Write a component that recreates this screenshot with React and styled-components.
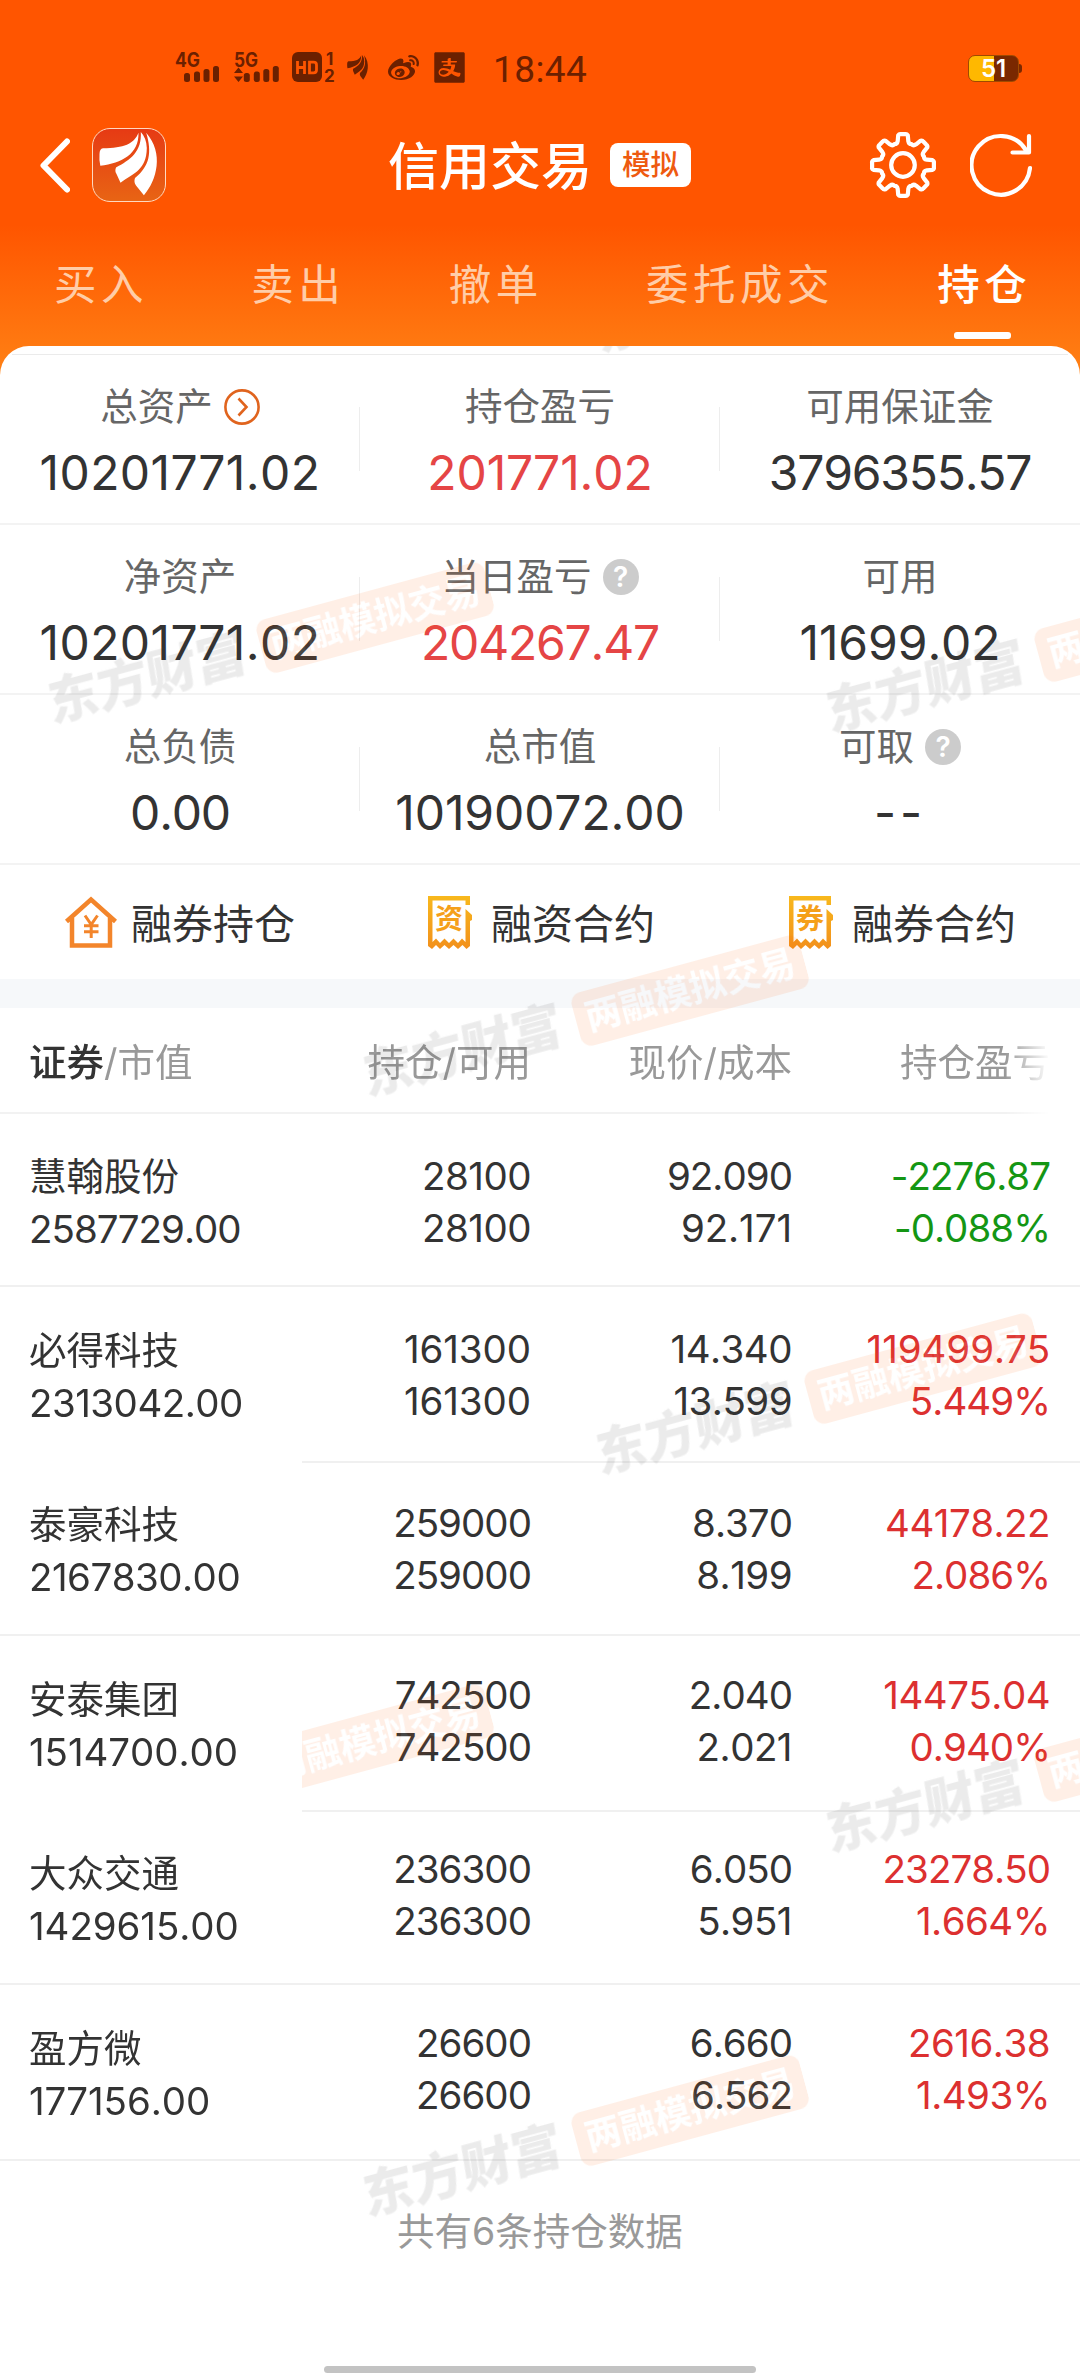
import React from 'react';
import styled, { createGlobalStyle, css } from 'styled-components';
import { FaWeibo } from 'react-icons/fa';
import { AiFillAlipaySquare } from 'react-icons/ai';

const GlobalStyle = createGlobalStyle`
    * {
        box-sizing: border-box;
    }

    body {
        margin: 0;
        background: #ffffff;
        font-family: Inter, "Noto Sans CJK SC", sans-serif;
        color: #333333;
    }
`;

const Screen = styled.div`
    position: relative;
    width: 1080px;
    height: 2376px;
    overflow: hidden;
    display: flex;
    flex-direction: column;
    background: linear-gradient(#ff5500 0, #ff5500 225px, #ff8014 370px, #ff8014 400px, #ffffff 400px);
`;

/* ---------- status bar ---------- */

const StatusBar = styled.div`
    height: 120px;
    padding: 52px 61px 0 175px;
    display: flex;
    align-items: flex-start;
    color: #6b2000;
`;

const StatusSvg = styled.svg`
    display: block;
    flex: none;
    overflow: visible;
    margin-right: ${(p) => p.$gap || 0}px;
    margin-top: ${(p) => p.$top || 0}px;
    fill: currentColor;
`;

const StatusGlyph = styled.div`
    display: flex;
    margin-top: ${(p) => p.$top || 0}px;
    margin-right: ${(p) => p.$gap}px;
`;

const Clock = styled.div`
    font-family: Roboto, sans-serif;
    font-size: 37px;
    line-height: 36px;
    letter-spacing: 0.4px;
`;

const Battery = styled.div`
    position: relative;
    width: 51px;
    height: 27px;
    margin: 3px 0 0 auto;
    border-radius: 7px;
    border: 1px solid #a04a00;
    background: linear-gradient(90deg, #ffb800 51%, #7a2800 51%);
    color: #ffffff;
    font-size: 24px;
    font-weight: 600;
    line-height: 26px;
    text-align: center;

    &::after {
        content: "";
        position: absolute;
        right: -4px;
        top: 8px;
        width: 3px;
        height: 9px;
        border-radius: 0 3px 3px 0;
        background: #7a2800;
    }
`;

/* ---------- title bar ---------- */

const TitleBar = styled.div`
    height: 110px;
    padding: 8px 48px 0 40px;
    display: grid;
    grid-template-columns: 348px 1fr auto;
    align-items: start;
`;

const TitleLeft = styled.div`
    display: flex;
    gap: 22px;
`;

const AppLogo = styled.div`
    width: 74px;
    height: 74px;
    border-radius: 18px;
    border: 1px solid #ffd9c0;
    background: linear-gradient(#e63a14, #e86414);
    overflow: hidden;
`;

const Title = styled.div`
    display: flex;
    align-items: flex-start;
    gap: 18px;
    height: 74px;
    color: #ffffff;
    font-size: 51px;
    font-weight: 500;
    line-height: 77px;
`;

const ModeBadge = styled.span`
    width: 81px;
    height: 44px;
    margin-top: 15px;
    border-radius: 8px;
    background: #ffffff;
    color: #ee5a10;
    font-size: 28.5px;
    font-weight: 500;
    line-height: 43px;
    text-align: center;
`;

const TitleActions = styled.div`
    display: flex;
    gap: 33px;
    padding-top: 3px;
`;

const LineSvg = styled.svg`
    display: block;
    flex: none;
    fill: none;
    stroke: #ffffff;
    stroke-linecap: round;
    stroke-linejoin: round;
`;

/* ---------- tabs ---------- */

const Tabs = styled.div`
    height: 116px;
    padding-left: 54px;
    display: flex;
    gap: 103.3px;
`;

const Tab = styled.div`
    position: relative;
    padding-top: 25px;
    color: ${(p) => (p.$active ? '#ffffff' : '#ffcda8')};
    font-size: 42.5px;
    font-weight: ${(p) => (p.$active ? 500 : 400)};
    line-height: 60px;
    letter-spacing: 4.5px;
    white-space: nowrap;

    ${(p) =>
        p.$active &&
        css`
            &::after {
                content: "";
                position: absolute;
                left: 17px;
                top: 102px;
                width: 57px;
                height: 7px;
                border-radius: 3px;
                background: #ffffff;
            }
        `}
`;

/* ---------- account summary ---------- */

const Sheet = styled.div`
    flex: 1;
    border-radius: 29px 29px 0 0;
    background: #ffffff;
    overflow: hidden;
`;

const TopRule = styled.div`
    height: 1px;
    margin: 8px 12px 0;
    background: #ebebeb;
`;

const SummaryRow = styled.div`
    height: 170px;
    border-bottom: 2px solid #f3f3f3;
    display: grid;
    grid-template-columns: repeat(3, 1fr);
    align-items: end;
`;

const SummaryCell = styled.div`
    height: 135px;
    display: flex;
    flex-direction: column;
    align-items: center;
    background: linear-gradient(#ededed, #ededed) no-repeat right 19px / 1px 64px;

    &:last-child {
        background: none;
    }
`;

const SummaryLabel = styled.div`
    height: 38px;
    display: flex;
    align-items: center;
    gap: 11px;
    color: #666666;
    font-size: 37.5px;
    line-height: 38px;
`;

const SummaryValue = styled.div`
    margin-top: 27px;
    color: ${(p) => (p.$red ? '#e54545' : '#333333')};
    font-size: 48px;
    line-height: 40px;
`;

// tracking is looser for values with many narrow "1" digits
const Num = styled.div`
    font-kerning: none;
    letter-spacing: ${(p) => (p.children === '--' ? '0.08em' : `${-0.025 + 0.0115 * p.children.split('1').length - 0.0115}em`)};
`;

const HelpDot = styled.span`
    width: 36px;
    height: 36px;
    border-radius: 50%;
    background: #cccccc;
    color: #ffffff;
    font-size: 28px;
    font-weight: 600;
    line-height: 36px;
    text-align: center;
`;

/* ---------- shortcuts ---------- */

const Shortcuts = styled.div`
    height: 114px;
    display: grid;
    grid-template-columns: 360px 361px 359px;
`;

const Shortcut = styled.div`
    display: flex;
    align-items: flex-start;
    padding: 31px 0 0 65px;
    font-size: 41px;
    line-height: 56px;
`;

const ShortcutIcon = styled.svg`
    display: block;
    flex: none;
    width: 52px;
    height: 54px;
    margin-right: 14px;
    overflow: visible;
`;

const Band = styled.div`
    height: 29px;
    background: #f6f8fa;
`;

/* ---------- holdings ---------- */

const HeadRow = styled.div`
    height: 106px;
    display: grid;
    grid-template-columns: 302px 229px 261px 258px;
    width: 1050px;
    border-bottom: 2px solid #f2f2f2;
    color: #999999;
    font-size: 37.5px;
    line-height: 109px;
    text-align: right;
    mask-image: linear-gradient(90deg, #000 1005px, transparent 1050px);

    & > :first-child {
        padding-left: 29px;
        text-align: left;
    }

    b {
        font-weight: 500;
        color: #333333;
    }
`;

const HoldingRow = styled.div`
    height: ${(p) => p.$height}px;
    display: grid;
    grid-template-columns: 302px 229px 261px 258px 30px;
    font-size: 38.5px;
    background: linear-gradient(#f0f0f0, #f0f0f0) no-repeat left bottom / 100% 2px;
`;

const NameCell = styled.div`
    position: relative;
    z-index: 2;
    height: ${(p) => (p.$covers ? '100%' : 'calc(100% - 2px)')};
    padding: ${(p) => p.$offset}px 0 0 29px;
    background: #ffffff;
    display: flex;
    flex-direction: column;
    gap: 16px;
    line-height: 37px;
`;

const StockName = styled.div`
    font-size: 37.5px;
`;

const ValueCell = styled.div`
    padding-top: ${(p) => p.$offset}px;
    display: flex;
    flex-direction: column;
    gap: 15px;
    line-height: 37px;
    text-align: right;
    color: ${(p) => p.$color || '#333333'};
`;

const Footnote = styled.div`
    padding-top: 49px;
    color: #999999;
    font-size: 37.5px;
    line-height: 44px;
    text-align: center;
`;

const HomeIndicator = styled.div`
    position: absolute;
    left: 324px;
    bottom: 3px;
    width: 432px;
    height: 7px;
    border-radius: 4px;
    background: #c3c3c3;
`;

/* ---------- watermark ---------- */

const WatermarkLayer = styled.div`
    position: absolute;
    inset: 346px 0 0 0;
    z-index: 1;
    overflow: hidden;
    pointer-events: none;
`;

const Watermark = styled.div`
    position: absolute;
    left: ${(p) => p.$x}px;
    top: ${(p) => p.$y}px;
    width: 456px;
    height: 55px;
    display: flex;
    align-items: center;
    justify-content: space-between;
    opacity: 0.1;
    transform: rotate(-15.2deg);
`;

const WatermarkBrand = styled.span`
    font-size: 51px;
    font-weight: 900;
    line-height: 50px;
    padding-bottom: 3px;
    transform: skewX(-6deg);
`;

const WatermarkTag = styled.span`
    width: 236px;
    height: 55px;
    border-radius: 11px;
    background: #ff5500;
    color: #ffffff;
    font-size: 36px;
    font-weight: 700;
    line-height: 54px;
    text-align: center;
`;

const watermarks = [
    [589, -98],
    [41, 273],
    [819, 282],
    [356, 646],
    [589, 1024],
    [41, 1395],
    [819, 1402],
    [356, 1766],
];

const summary = [
    [
        { label: '总资产', value: '10201771.02', icon: 'more' },
        { label: '持仓盈亏', value: '201771.02', red: true },
        { label: '可用保证金', value: '3796355.57' },
    ],
    [
        { label: '净资产', value: '10201771.02' },
        { label: '当日盈亏', value: '204267.47', icon: 'help', red: true },
        { label: '可用', value: '11699.02' },
    ],
    [
        { label: '总负债', value: '0.00' },
        { label: '总市值', value: '10190072.00' },
        { label: '可取', value: '--', icon: 'help' },
    ],
];

const RED = '#dc3030';
const GREEN = '#149614';

const holdings = [
    { name: '慧翰股份', market: '2587729.00', qty: '28100', free: '28100', price: '92.090', cost: '92.171', profit: '-2276.87', rate: '-0.088%', color: GREEN, height: 173, nameTop: 44, valueTop: 44 },
    { name: '必得科技', market: '2313042.00', qty: '161300', free: '161300', price: '14.340', cost: '13.599', profit: '119499.75', rate: '5.449%', color: RED, height: 176, nameTop: 45, valueTop: 44, covers: true },
    { name: '泰豪科技', market: '2167830.00', qty: '259000', free: '259000', price: '8.370', cost: '8.199', profit: '44178.22', rate: '2.086%', color: RED, height: 173, nameTop: 43, valueTop: 42 },
    { name: '安泰集团', market: '1514700.00', qty: '742500', free: '742500', price: '2.040', cost: '2.021', profit: '14475.04', rate: '0.940%', color: RED, height: 176, nameTop: 45, valueTop: 41, covers: true },
    { name: '大众交通', market: '1429615.00', qty: '236300', free: '236300', price: '6.050', cost: '5.951', profit: '23278.50', rate: '1.664%', color: RED, height: 173, nameTop: 43, valueTop: 39 },
    { name: '盈方微', market: '177156.00', qty: '26600', free: '26600', price: '6.660', cost: '6.562', profit: '2616.38', rate: '1.493%', color: RED, height: 176, nameTop: 45, valueTop: 40 },
];

function Feathers() {
    return (
        <>
            <path d="M46.5 4.7C42 16 32 20 11 20.3Q7.5 21 7.5 26Q7 32 8.3 37.7C30 35 47 26 46.5 4.7Z" />
            <path d="M48.8 4C50 24 38 32 24 39.5Q22.5 43 24.5 46L28.5 54.7C42 45 54.5 42 54.8 20Q54.5 10 48.8 4Z" />
            <path d="M54.2 4.7C60 24 58 38 43 50Q41.5 54 44 57.5L51.9 67.3C65 52 72 25 54.2 4.7Z" />
        </>
    );
}

function SignalBars() {
    return (
        <>
            <rect x="9" y="21" width="6" height="9" rx="2.5" />
            <rect x="19" y="19.5" width="6" height="10.5" rx="2.5" />
            <rect x="28.5" y="17" width="6" height="13" rx="2.5" />
            <rect x="38" y="14" width="6" height="16" rx="2.5" />
        </>
    );
}

function gearPath() {
    const at = (r, a) => `${(34 + r * Math.sin(a)).toFixed(1)} ${(34 - r * Math.cos(a)).toFixed(1)}`;
    let d = '';
    for (let i = 0; i < 8; i++) {
        const a = (i * Math.PI) / 4;
        d += `${i ? 'L' : 'M'}${at(24.5, a - 0.22)}L${at(30, a - 0.16)}Q${at(31.5, a - 0.12)} ${at(31, a - 0.07)}`;
        d += `L${at(31, a + 0.07)}Q${at(31.5, a + 0.12)} ${at(30, a + 0.16)}L${at(24.5, a + 0.22)}`;
        d += `Q${at(21.5, a + 0.28)} ${at(22.6, a + 0.39)}Q${at(21.5, a + Math.PI / 4 - 0.28)} ${at(24.5, a + Math.PI / 4 - 0.22)}`;
    }
    return d + 'Z';
}

function MoreIcon() {
    return (
        <svg width="36" height="36" viewBox="0 0 36 36" fill="none" stroke="#e0641e" strokeWidth="2.6">
            <circle cx="18" cy="18" r="16.6" />
            <path d="M14.5 9.5L22.5 18L14.5 26.5" />
        </svg>
    );
}

function HouseIcon() {
    return (
        <ShortcutIcon viewBox="0 0 52 54" fill="none" stroke="#f3852b" strokeWidth="4.5">
            <path d="M1.5 25.5L26 3.5L50.5 25.5M7 22V49.5H45V22" />
            <path d="M20 19.5L26.2 28.5L32.5 19.5M26.2 28.5V42M19 29.8H33.5M19 35.8H33.5" strokeWidth="3" />
        </ShortcutIcon>
    );
}

const TicketText = styled.text`
    font-size: 28px;
    font-weight: 700;
    fill: #f5a01a;
`;

function TicketIcon({ text }) {
    return (
        <ShortcutIcon viewBox="-3 0 52 54">
            <defs>
                <linearGradient id="ticket" x1="0" y1="0" x2="0" y2="1">
                    <stop offset="0" stopColor="#f8b81c" />
                    <stop offset="1" stopColor="#f2901c" />
                </linearGradient>
            </defs>
            <path
                fill="url(#ticket)"
                fillRule="evenodd"
                d="M0 0H42V9H37.5V4.5H4.5V46L8 42.5L12 47L16.5 42.5L21 47L25.5 42.5L30 47L34 42.5L37.5 46V13L44 19V24L42 25V50L38.5 53L34.5 49L30 53L25.5 49L21 53L16.5 49L12 53L8 49L4 53L0 50Z"
            />
            <TicketText x="21" y="33" textAnchor="middle">{text}</TicketText>
        </ShortcutIcon>
    );
}

function App() {
    return (
        <Screen>
            <GlobalStyle />

            <StatusBar>
                <StatusSvg width="45" height="32" viewBox="0 0 45 32" $gap={14}>
                    <text x="0" y="14.5" fontSize="19.5" fontWeight="700" textLength="25" lengthAdjust="spacingAndGlyphs">4G</text>
                    <SignalBars />
                </StatusSvg>
                <StatusSvg width="46" height="32" viewBox="0 0 46 32" $gap={12}>
                    <text x="0" y="14.5" fontSize="19.5" fontWeight="700" textLength="24" lengthAdjust="spacingAndGlyphs">5G</text>
                    <path d="M0 21L4.5 15.5L9 21ZM0 24.5H9L4.5 30Z" />
                    <g transform="translate(.8 0)"><SignalBars /></g>
                </StatusSvg>
                <StatusSvg width="44" height="31" viewBox="0 0 44 31" $gap={11}>
                    <rect x="0" y="0" width="30" height="30" rx="6" />
                    <path d="M5.5 9V22M12.5 9V22M5.5 15.5H12.5M17.5 10.2V20.8H21.5Q24.5 20.8 24.5 18V13Q24.5 10.2 21.5 10.2Z" fill="none" stroke="#ff5500" strokeWidth="2.8" />
                    <text x="34" y="12.5" fontSize="17" fontWeight="700">1</text>
                    <text x="32" y="29.5" fontSize="17" fontWeight="700">2</text>
                </StatusSvg>
                <StatusSvg width="22" height="25" viewBox="7 4 61 64" preserveAspectRatio="none" $gap={19} $top={3}>
                    <Feathers />
                </StatusSvg>
                <StatusGlyph $gap={11} $top={1}><FaWeibo size={31} /></StatusGlyph>
                <StatusGlyph $gap={24} $top={-4}><AiFillAlipaySquare size={39} /></StatusGlyph>
                <Clock>18:44</Clock>
                <Battery>51</Battery>
            </StatusBar>

            <TitleBar>
                <TitleLeft>
                    <LineSvg width="30" height="74" viewBox="0 0 30 74" strokeWidth="6">
                        <path d="M27 13.5L3.5 37.5L27 61.5" />
                    </LineSvg>
                    <AppLogo>
                        <svg width="74" height="74" viewBox="1 1 74 74" fill="#ffffff"><Feathers /></svg>
                    </AppLogo>
                </TitleLeft>
                <Title>
                    信用交易
                    <ModeBadge>模拟</ModeBadge>
                </Title>
                <TitleActions>
                    <LineSvg width="68" height="68" viewBox="0 0 68 68" strokeWidth="4.2">
                        <path d={gearPath()} />
                        <circle cx="34" cy="34" r="11.8" />
                    </LineSvg>
                    <LineSvg width="62" height="68" viewBox="0 0 62 68" strokeWidth="4.2">
                        <path d="M60 37A29.3 29.3 0 1 1 55.5 18.5M59 5V21.5H42.5" />
                    </LineSvg>
                </TitleActions>
            </TitleBar>

            <Tabs>
                <Tab>买入</Tab>
                <Tab>卖出</Tab>
                <Tab>撤单</Tab>
                <Tab>委托成交</Tab>
                <Tab $active>持仓</Tab>
            </Tabs>

            <Sheet>
                <TopRule />
                {summary.map((row, i) => (
                    <SummaryRow key={i}>
                        {row.map((cell) => (
                            <SummaryCell key={cell.label}>
                                <SummaryLabel>
                                    {cell.label}
                                    {cell.icon === 'more' && <MoreIcon />}
                                    {cell.icon === 'help' && <HelpDot>?</HelpDot>}
                                </SummaryLabel>
                                <SummaryValue $red={cell.red}>
                                    <Num>{cell.value}</Num>
                                </SummaryValue>
                            </SummaryCell>
                        ))}
                    </SummaryRow>
                ))}

                <Shortcuts>
                    <Shortcut><HouseIcon />融券持仓</Shortcut>
                    <Shortcut><TicketIcon text="资" />融资合约</Shortcut>
                    <Shortcut><TicketIcon text="券" />融券合约</Shortcut>
                </Shortcuts>
                <Band />

                <HeadRow>
                    <div><b>证券</b>/市值</div>
                    <div>持仓/可用</div>
                    <div>现价/成本</div>
                    <div>持仓盈亏</div>
                </HeadRow>
                {holdings.map((h) => (
                    <HoldingRow key={h.name} $height={h.height}>
                        <NameCell $offset={h.nameTop} $covers={h.covers}>
                            <StockName>{h.name}</StockName>
                            <Num>{h.market}</Num>
                        </NameCell>
                        <ValueCell $offset={h.valueTop}>
                            <Num>{h.qty}</Num>
                            <Num>{h.free}</Num>
                        </ValueCell>
                        <ValueCell $offset={h.valueTop}>
                            <Num>{h.price}</Num>
                            <Num>{h.cost}</Num>
                        </ValueCell>
                        <ValueCell $offset={h.valueTop} $color={h.color}>
                            <Num>{h.profit}</Num>
                            <Num>{h.rate}</Num>
                        </ValueCell>
                    </HoldingRow>
                ))}
                <Footnote>共有6条持仓数据</Footnote>
            </Sheet>

            <WatermarkLayer>
                {watermarks.map(([x, y]) => (
                    <Watermark key={`${x}-${y}`} $x={x} $y={y}>
                        <WatermarkBrand>东方财富</WatermarkBrand>
                        <WatermarkTag>两融模拟交易</WatermarkTag>
                    </Watermark>
                ))}
            </WatermarkLayer>
            <HomeIndicator />
        </Screen>
    );
}

export default App;
